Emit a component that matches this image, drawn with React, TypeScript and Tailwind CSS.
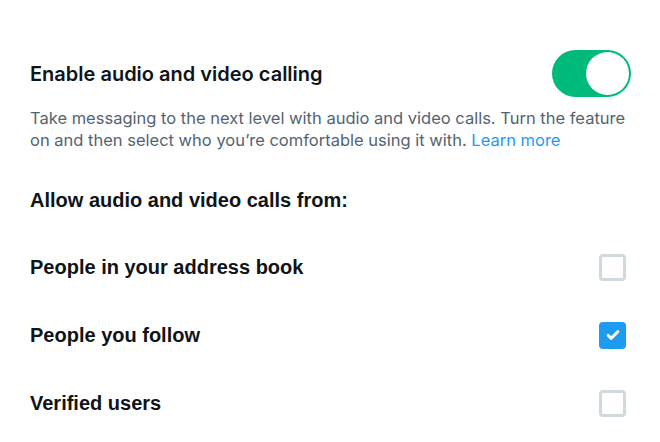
import { useState } from 'react';

const sources = [
  { id: 'address', label: 'People in your address book' },
  { id: 'follow', label: 'People you follow' },
  { id: 'verified', label: 'Verified users' },
];

function Toggle({ on, onChange }: { on: boolean; onChange: () => void }) {
  return (
    <button
      onClick={onChange}
      aria-label="Enable audio and video calling"
      className={`flex h-[47px] w-[79px] items-center rounded-full p-[2px] ${on ? 'justify-end bg-[#00ba7c]' : 'justify-start bg-[#cfd9de]'}`}
    >
      <span className="h-[43px] w-[43px] rounded-full bg-white" />
    </button>
  );
}

function Box({ checked, onChange }: { checked: boolean; onChange: () => void }) {
  return (
    <button
      onClick={onChange}
      className={`flex h-[27px] w-[27px] items-center justify-center rounded-[4px] ${checked ? 'bg-[#1d9bf0]' : 'border-[3px] border-[#cfd9de] bg-white'}`}
    >
      {checked && (
        <svg viewBox="0 0 24 24" className="h-[18px] w-[18px]" fill="none" stroke="white" strokeWidth={3.8} strokeLinecap="round" strokeLinejoin="round">
          <path d="M5.5 12.5l4 4L18.5 7.5" />
        </svg>
      )}
    </button>
  );
}

export default function App() {
  const [enabled, setEnabled] = useState(true);
  const [picked, setPicked] = useState<Record<string, boolean>>({ follow: true });

  return (
    <div className="h-[442px] w-[660px] overflow-hidden bg-white text-[#0f1419]">
      <div className="flex items-center justify-between pl-[30px] pr-[29px] pt-[50px]">
        <h2 className="font-['Inter',sans-serif] text-[20px] font-semibold">Enable audio and video calling</h2>
        <Toggle on={enabled} onChange={() => setEnabled(!enabled)} />
      </div>
      <p className="mt-[10px] px-[30px] font-['Inter',sans-serif] text-[16.5px] leading-[22px] text-[#536471]">
        Take messaging to the next level with audio and video calls. Turn the feature on and then select who you’re comfortable using it with.{' '}
        <a href="#" className="text-[#1d9bf0]">Learn more</a>
      </p>
      <h3 className="mt-[37px] px-[30px] font-['Liberation_Sans',sans-serif] text-[20px] font-bold leading-[24px]">
        Allow audio and video calls from:
      </h3>
      <div className="mt-[21px] flex flex-col">
        {sources.map((s) => (
          <label key={s.id} className="flex h-[68px] items-center justify-between pl-[30px] pr-[34px]">
            <span className="font-['Liberation_Sans',sans-serif] text-[20px] font-bold">{s.label}</span>
            <Box checked={!!picked[s.id]} onChange={() => setPicked({ ...picked, [s.id]: !picked[s.id] })} />
          </label>
        ))}
      </div>
    </div>
  );
}
